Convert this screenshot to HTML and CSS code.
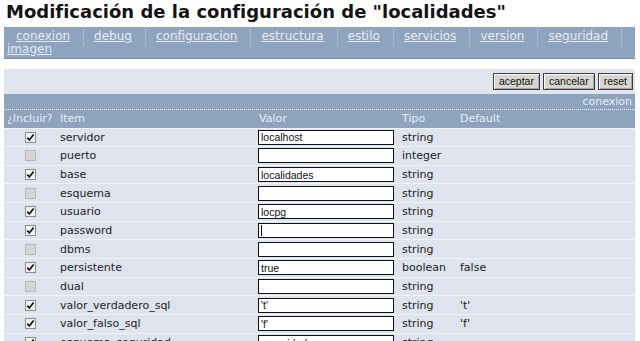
FILE: index.html
```html
<!DOCTYPE html>
<html lang="es">
<head>
<meta charset="utf-8">
<title>Modificación de la configuración</title>
<link rel="stylesheet" href="styles.css">
</head>
<body>
<h1 class="title">Modificación de la configuración de "localidades"</h1>
<nav class="tabs">
  <a class="tab" href="#">conexion</a><wbr><a class="tab" href="#">debug</a><wbr><a class="tab" href="#">configuracion</a><wbr><a class="tab" href="#">estructura</a><wbr><a class="tab" href="#">estilo</a><wbr><a class="tab" href="#">servicios</a><wbr><a class="tab" href="#">version</a><wbr><a class="tab" href="#">seguridad</a><wbr><a class="tab tab-last" href="#">imagen</a>
</nav>
<div class="actions">
  <button class="btn">aceptar</button>
  <button class="btn">cancelar</button>
  <button class="btn">reset</button>
</div>
<div class="section-head">
  <div class="section-name">conexion</div>
  <div class="row head-row">
    <div class="cell">¿Incluir?</div>
    <div class="cell">Item</div>
    <div class="cell">Valor</div>
    <div class="cell">Tipo</div>
    <div class="cell">Default</div>
  </div>
</div>
<div class="rows">
  <div class="row">
    <div class="cell cell-cb"><svg class="cb" viewBox="0 0 11 11"><rect class="cb-on" x="0.5" y="0.5" width="10" height="10"/><path class="tick" d="M2.3 5.6 L4.4 8 L8.6 2.4"/></svg></div>
    <div class="cell">servidor</div>
    <div class="cell"><input class="field" type="text" value="localhost"></div>
    <div class="cell">string</div>
    <div class="cell"></div>
  </div>
  <div class="row">
    <div class="cell cell-cb"><svg class="cb" viewBox="0 0 11 11"><rect class="cb-off" x="0.5" y="0.5" width="10" height="10"/></svg></div>
    <div class="cell">puerto</div>
    <div class="cell"><input class="field" type="text" value=""></div>
    <div class="cell">integer</div>
    <div class="cell"></div>
  </div>
  <div class="row">
    <div class="cell cell-cb"><svg class="cb" viewBox="0 0 11 11"><rect class="cb-on" x="0.5" y="0.5" width="10" height="10"/><path class="tick" d="M2.3 5.6 L4.4 8 L8.6 2.4"/></svg></div>
    <div class="cell">base</div>
    <div class="cell"><input class="field" type="text" value="localidades"></div>
    <div class="cell">string</div>
    <div class="cell"></div>
  </div>
  <div class="row">
    <div class="cell cell-cb"><svg class="cb" viewBox="0 0 11 11"><rect class="cb-off" x="0.5" y="0.5" width="10" height="10"/></svg></div>
    <div class="cell">esquema</div>
    <div class="cell"><input class="field" type="text" value=""></div>
    <div class="cell">string</div>
    <div class="cell"></div>
  </div>
  <div class="row">
    <div class="cell cell-cb"><svg class="cb" viewBox="0 0 11 11"><rect class="cb-on" x="0.5" y="0.5" width="10" height="10"/><path class="tick" d="M2.3 5.6 L4.4 8 L8.6 2.4"/></svg></div>
    <div class="cell">usuario</div>
    <div class="cell"><input class="field" type="text" value="locpg"></div>
    <div class="cell">string</div>
    <div class="cell"></div>
  </div>
  <div class="row">
    <div class="cell cell-cb"><svg class="cb" viewBox="0 0 11 11"><rect class="cb-on" x="0.5" y="0.5" width="10" height="10"/><path class="tick" d="M2.3 5.6 L4.4 8 L8.6 2.4"/></svg></div>
    <div class="cell">password</div>
    <div class="cell"><input class="field field-caret" type="text" value=""></div>
    <div class="cell">string</div>
    <div class="cell"></div>
  </div>
  <div class="row">
    <div class="cell cell-cb"><svg class="cb" viewBox="0 0 11 11"><rect class="cb-off" x="0.5" y="0.5" width="10" height="10"/></svg></div>
    <div class="cell">dbms</div>
    <div class="cell"><input class="field" type="text" value=""></div>
    <div class="cell">string</div>
    <div class="cell"></div>
  </div>
  <div class="row">
    <div class="cell cell-cb"><svg class="cb" viewBox="0 0 11 11"><rect class="cb-on" x="0.5" y="0.5" width="10" height="10"/><path class="tick" d="M2.3 5.6 L4.4 8 L8.6 2.4"/></svg></div>
    <div class="cell">persistente</div>
    <div class="cell"><input class="field" type="text" value="true"></div>
    <div class="cell">boolean</div>
    <div class="cell">false</div>
  </div>
  <div class="row">
    <div class="cell cell-cb"><svg class="cb" viewBox="0 0 11 11"><rect class="cb-off" x="0.5" y="0.5" width="10" height="10"/></svg></div>
    <div class="cell">dual</div>
    <div class="cell"><input class="field" type="text" value=""></div>
    <div class="cell">string</div>
    <div class="cell"></div>
  </div>
  <div class="row">
    <div class="cell cell-cb"><svg class="cb" viewBox="0 0 11 11"><rect class="cb-on" x="0.5" y="0.5" width="10" height="10"/><path class="tick" d="M2.3 5.6 L4.4 8 L8.6 2.4"/></svg></div>
    <div class="cell">valor_verdadero_sql</div>
    <div class="cell"><input class="field" type="text" value="'t'"></div>
    <div class="cell">string</div>
    <div class="cell">'t'</div>
  </div>
  <div class="row">
    <div class="cell cell-cb"><svg class="cb" viewBox="0 0 11 11"><rect class="cb-on" x="0.5" y="0.5" width="10" height="10"/><path class="tick" d="M2.3 5.6 L4.4 8 L8.6 2.4"/></svg></div>
    <div class="cell">valor_falso_sql</div>
    <div class="cell"><input class="field" type="text" value="'f'"></div>
    <div class="cell">string</div>
    <div class="cell">'f'</div>
  </div>
  <div class="row">
    <div class="cell cell-cb"><svg class="cb" viewBox="0 0 11 11"><rect class="cb-on" x="0.5" y="0.5" width="10" height="10"/><path class="tick" d="M2.3 5.6 L4.4 8 L8.6 2.4"/></svg></div>
    <div class="cell">esquema_seguridad</div>
    <div class="cell"><input class="field" type="text" value="seguridad"></div>
    <div class="cell">string</div>
    <div class="cell"></div>
  </div>
</div>
</body>
</html>
```
FILE: styles.css
```css
html, body {
  background: #ffffff;
}
body {
  margin: 0;
  padding: 0 5px 0 4px;
  font-family: "DejaVu Sans", Verdana, sans-serif;
  color: #1e1e1e;
  overflow: hidden;
}
.title {
  margin: 0;
  padding: 1px 0 0 2px;
  font-size: 18px;
  line-height: 22px;
  font-weight: 700;
  color: #141414;
}
.tabs {
  margin-top: 4px;
  margin-bottom: 10px;
  padding: 3px 2px 2px;
  background: #8ea3be;
  border-bottom: 1px solid #7b8ca4;
  font-size: 12px;
  line-height: 13px;
}
.tab {
  color: #e6ecf4;
  text-decoration: underline;
  padding: 3px 13px 3px 10px;
  border-right: 1px dotted #c3cfdf;
}
.tab-last {
  padding-left: 1px;
  border-right: none;
}
.actions {
  display: flex;
  justify-content: flex-end;
  gap: 3px;
  padding: 4px 2px;
  background: #e2e5ee;
}
.btn {
  height: 17px;
  padding: 0 5px;
  margin: 0;
  font-family: "Liberation Sans", Arial, sans-serif;
  font-size: 10.5px;
  line-height: 15px;
  color: #111;
  background: #d8d6d0;
  border: 1px solid #3c3c3c;
  border-radius: 0;
  box-shadow: inset 1px 1px 0 #fbfbfb, inset -1px -1px 0 #a8a8a8;
}
.section-head {
  background: #8ea3be;
  color: #e8eef5;
  font-size: 11px;
}
.section-name {
  height: 15px;
  line-height: 15px;
  text-align: right;
  padding-right: 3px;
  border-bottom: 1px dotted #f2f5f9;
}
.row {
  display: grid;
  grid-template-columns: 53px 199px 143px 58px 1fr;
  align-items: center;
  box-sizing: border-box;
  height: 18.66px;
  font-size: 11px;
}
.head-row {
  height: 17.5px;
}
.cell {
  padding-left: 3px;
  white-space: nowrap;
}
.cell-cb {
  padding-left: 0;
  display: flex;
  justify-content: center;
}
.rows {
  background: #dee3ed;
}
.rows .row {
  border-top: 1px solid #f0f3f8;
  color: #222;
}
.cb {
  width: 11px;
  height: 11px;
  display: block;
}
.cb-on {
  fill: #f2f2f2;
  stroke: #8c8c8c;
  stroke-width: 1;
}
.cb-off {
  fill: #d6d6d6;
  stroke: #b8b8b8;
  stroke-width: 1;
}
.tick {
  fill: none;
  stroke: #111;
  stroke-width: 1.7;
}
.field {
  display: block;
  box-sizing: border-box;
  width: 136px;
  height: 15px;
  margin: 0 0 0 -1px;
  padding: 0 2px;
  border: 1px solid #111;
  border-radius: 0;
  background: #ffffff;
  font-family: "Liberation Sans", Arial, sans-serif;
  font-size: 10.5px;
  color: #111;
  outline: none;
}
.field-caret {
  background: linear-gradient(#111, #111) no-repeat 2px 1px / 1px 11px, #ffffff;
}
```
